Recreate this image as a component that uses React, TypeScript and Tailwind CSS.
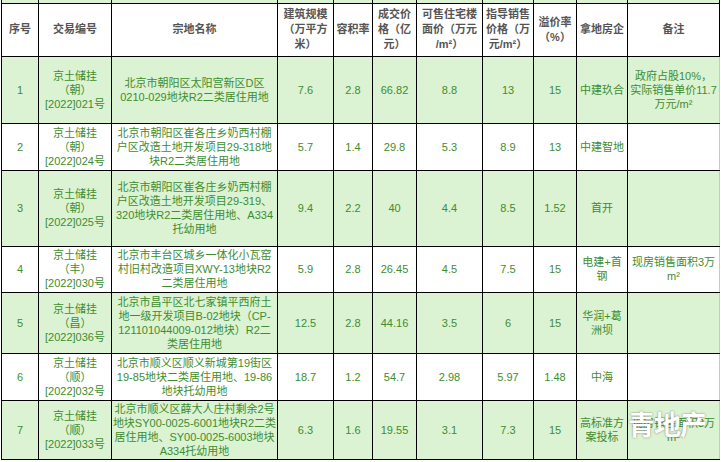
import React from "react";

type Row = {
  no: string;
  code: string[];
  name: string[];
  area: string;
  far: string;
  price: string;
  floor: string;
  guide: string;
  premium: string;
  dev: string[];
  note: string[];
  height: string;
  green: boolean;
};

const rows: Row[] = [
  {
    no: "1",
    code: ["京土储挂", "（朝）", "[2022]021号"],
    name: ["北京市朝阳区太阳宫新区D区", "0210-029地块R2二类居住用地"],
    area: "7.6",
    far: "2.8",
    price: "66.82",
    floor: "8.8",
    guide: "13",
    premium: "15",
    dev: ["中建玖合"],
    note: ["政府占股10%，", "实际销售单价11.7", "万元/m²"],
    height: "h-[67px]",
    green: true,
  },
  {
    no: "2",
    code: ["京土储挂", "（朝）", "[2022]024号"],
    name: ["北京市朝阳区崔各庄乡奶西村棚", "户区改造土地开发项目29-318地", "块R2二类居住用地"],
    area: "5.7",
    far: "1.4",
    price: "29.8",
    floor: "5.3",
    guide: "8.9",
    premium: "13",
    dev: ["中建智地"],
    note: [],
    height: "h-[47px]",
    green: false,
  },
  {
    no: "3",
    code: ["京土储挂", "（朝）", "[2022]025号"],
    name: ["北京市朝阳区崔各庄乡奶西村棚", "户区改造土地开发项目29-319、", "320地块R2二类居住用地、A334", "托幼用地"],
    area: "9.4",
    far: "2.2",
    price: "40",
    floor: "4.4",
    guide: "8.5",
    premium: "1.52",
    dev: ["首开"],
    note: [],
    height: "h-[76px]",
    green: true,
  },
  {
    no: "4",
    code: ["京土储挂", "（丰）", "[2022]030号"],
    name: ["北京市丰台区城乡一体化小瓦窑", "村旧村改造项目XWY-13地块R2", "二类居住用地"],
    area: "5.9",
    far: "2.8",
    price: "26.45",
    floor: "4.5",
    guide: "7.5",
    premium: "15",
    dev: ["电建+首", "钢"],
    note: ["现房销售面积3万", "m²"],
    height: "h-[46px]",
    green: false,
  },
  {
    no: "5",
    code: ["京土储挂", "（昌）", "[2022]036号"],
    name: ["北京市昌平区北七家镇平西府土", "地一级开发项目B-02地块（CP-", "121101044009-012地块）R2二", "类居住用地"],
    area: "12.5",
    far: "2.8",
    price: "44.16",
    floor: "3.5",
    guide: "6",
    premium: "15",
    dev: ["华润+葛", "洲坝"],
    note: [],
    height: "h-[61px]",
    green: true,
  },
  {
    no: "6",
    code: ["京土储挂", "（顺）", "[2022]032号"],
    name: ["北京市顺义区顺义新城第19街区", "19-85地块二类居住用地、19-86", "地块托幼用地"],
    area: "18.7",
    far: "1.2",
    price: "54.7",
    floor: "2.98",
    guide: "5.97",
    premium: "1.48",
    dev: ["中海"],
    note: [],
    height: "h-[47px]",
    green: false,
  },
  {
    no: "7",
    code: ["京土储挂", "（顺）", "[2022]033号"],
    name: ["北京市顺义区薛大人庄村剩余2号", "地块SY00-0025-6001地块R2二类", "居住用地、SY00-0025-6003地块", "A334托幼用地"],
    area: "6.3",
    far: "1.6",
    price: "19.55",
    floor: "3.1",
    guide: "7.3",
    premium: "15",
    dev: ["高标准方", "案投标"],
    note: ["现房销售面积3万", "m²"],
    height: "h-[59px]",
    green: true,
  },
];

const headers: string[][] = [
  ["序号"],
  ["交易编号"],
  ["宗地名称"],
  ["建筑规模", "（万平方", "米）"],
  ["容积率"],
  ["成交价", "格（亿", "元）"],
  ["可售住宅楼", "面价（万元", "/m²）"],
  ["指导销售", "价格（万", "元/m²）"],
  ["溢价率", "（%）"],
  ["拿地房企"],
  ["备注"],
];

const widths = ["w-[37px]", "w-[73px]", "w-[166px]", "w-[56px]", "w-[39px]", "w-[44px]", "w-[66px]", "w-[51px]", "w-[43px]", "w-[51px]", "w-[92px]"];

function Lines({ lines }: { lines: string[] }) {
  return (
    <>
      {lines.map((l, i) => (
        <div key={i} className="whitespace-nowrap">
          {l}
        </div>
      ))}
    </>
  );
}

const cell = "border border-black p-0 text-center align-middle";

export default function App() {
  return (
    <div
      className="relative w-[721px] h-[462px] overflow-hidden bg-white"
      style={{ fontFamily: "'Liberation Sans', 'Noto Sans CJK SC', sans-serif" }}
    >
      <table className="ml-[1px] table-fixed border-collapse w-[718px] text-[11px] leading-[14px] text-[#3e8d2f]">
        <colgroup>
          {widths.map((w, i) => (
            <col key={i} className={w} />
          ))}
        </colgroup>
        <tbody>
          <tr className="h-[3px] bg-[#dbf2d3]">
            {widths.map((_, i) => (
              <td key={i} className="border-x border-black p-0 leading-none text-[0px]" />
            ))}
          </tr>
          <tr className="h-[53px] bg-white text-[11px] font-bold text-[#555] leading-[15px]">
            {headers.map((h, i) => (
              <td key={i} className={cell}>
                <Lines lines={h} />
              </td>
            ))}
          </tr>
          {rows.map((r) => (
            <tr key={r.no} className={`${r.height} ${r.green ? "bg-[#dbf2d3]" : "bg-white"}`}>
              <td className={cell}>{r.no}</td>
              <td className={cell}>
                <Lines lines={r.code} />
              </td>
              <td className={cell}>
                <Lines lines={r.name} />
              </td>
              <td className={cell}>{r.area}</td>
              <td className={cell}>{r.far}</td>
              <td className={cell}>{r.price}</td>
              <td className={cell}>{r.floor}</td>
              <td className={cell}>{r.guide}</td>
              <td className={cell}>{r.premium}</td>
              <td className={cell}>
                <Lines lines={r.dev} />
              </td>
              <td className={`${cell} border-r-[#c8c8c8]`}>
                <Lines lines={r.note} />
              </td>
            </tr>
          ))}
        </tbody>
      </table>
      {/* watermark */}
      <div
        className="absolute left-[628px] top-[413px] text-[27px] font-bold leading-none text-white tracking-[-1px]"
        style={{ textShadow: "0 0 2px rgba(0,0,0,0.5)" }}
      >
        青地产
      </div>
    </div>
  );
}
